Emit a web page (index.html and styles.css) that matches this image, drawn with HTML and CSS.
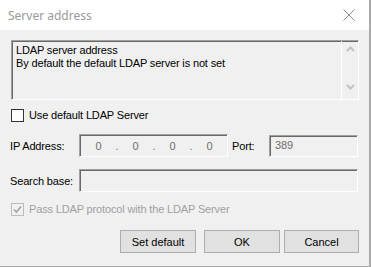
FILE: index.html
```
<html>

<head>
  <title>Server address</title>
  <link rel="stylesheet" href="styles.css">
</head>

<body>
  <div class="window">
    <div class="titlebar">
      <span class="title">Server address</span>
      <svg class="close" width="12" height="12" viewBox="0 0 12 12">
        <path d="M0.5 0.5 L11.5 11.5 M11.5 0.5 L0.5 11.5" stroke="#8a8a8a" stroke-width="1" fill="none" />
      </svg>
    </div>
    <div class="content">
      <div class="info-box sunken">
        <div class="info-text">
          <div>LDAP server address</div>
          <div>By default the default LDAP server is not set</div>
        </div>
        <div class="scrollbar">
          <svg width="9" height="6" viewBox="0 0 9 6">
            <path d="M1 5 L4.5 1.5 L8 5" stroke="#c2c2c2" stroke-width="2" fill="none" />
          </svg>
          <svg width="9" height="6" viewBox="0 0 9 6">
            <path d="M1 1 L4.5 4.5 L8 1" stroke="#c2c2c2" stroke-width="2" fill="none" />
          </svg>
        </div>
      </div>

      <label class="check-row">
        <span class="check-box"></span>
        Use default LDAP Server
      </label>

      <div class="field-row ip-row">
        <span class="field-label">IP Address:</span>
        <div class="ip-field sunken">
          <span class="octet">0</span><span class="dot">.</span>
          <span class="octet">0</span><span class="dot">.</span>
          <span class="octet">0</span><span class="dot">.</span>
          <span class="octet">0</span>
        </div>
        <span class="port-label">Port:</span>
        <div class="port-field sunken">389</div>
      </div>

      <div class="field-row search-row">
        <span class="field-label">Search base:</span>
        <div class="search-field sunken"></div>
      </div>

      <label class="check-row disabled">
        <span class="check-box checked">
          <svg width="9" height="9" viewBox="0 0 9 9">
            <path d="M1 4.5 L3.5 7 L8 1.5" stroke="#a3a3a3" stroke-width="1.6" fill="none" />
          </svg>
        </span>
        Pass LDAP protocol with the LDAP Server
      </label>

      <div class="buttons">
        <button class="btn btn-default">Set default</button>
        <button class="btn btn-ok">OK</button>
        <button class="btn btn-cancel">Cancel</button>
      </div>
    </div>
  </div>
</body>

</html>
```

FILE: styles.css
```
body {
  margin: 0;
  font-family: 'Liberation Sans', Arial, sans-serif;
  font-size: 11px;
  letter-spacing: -0.15px;
  color: #000;
  background: #f0f0f0;
}

.window {
  width: 369px;
  height: 266px;
  border-right: 2px solid #a9a9a9;
  border-bottom: 1px solid #a9a9a9;
  background: #f0f0f0;
  display: flex;
  flex-direction: column;
}

.titlebar {
  height: 30px;
  background: #fff;
  display: flex;
  align-items: center;
  justify-content: space-between;
  padding: 0 14px 0 8px;
}

.title {
  font-family: 'Noto Sans', sans-serif;
  font-size: 12px;
  letter-spacing: 0;
  color: #999;
}

.content {
  padding: 10px 10px 0 11px;
  display: flex;
  flex-direction: column;
}

.sunken {
  border: 1px solid;
  border-color: #a0a0a0 #fff #fff #a0a0a0;
  box-shadow: inset 1px 1px 0 #696969;
  background: #f0f0f0;
  box-sizing: border-box;
}

.info-box {
  width: 348px;
  height: 60px;
  display: flex;
}

.info-text {
  flex: 1;
  padding: 3px 0 0 4px;
  line-height: 13px;
}

.scrollbar {
  width: 17px;
  border-left: 1px solid #fff;
  display: flex;
  flex-direction: column;
  align-items: center;
  justify-content: space-between;
  padding: 5px 0 9px;
  box-sizing: border-box;
}

.check-row {
  display: flex;
  align-items: center;
  gap: 5px;
  margin-top: 9px;
  height: 12px;
}

.check-box {
  width: 11px;
  height: 11px;
  border: 1px solid #333;
  background: #fff;
  display: flex;
  align-items: center;
  justify-content: center;
}

.check-row.disabled {
  color: #a0a0a0;
  margin-top: 11px;
}

.check-box.checked {
  border-color: #bcbcbc;
  background: #f0f0f0;
}

.field-row {
  display: flex;
  align-items: center;
}

.ip-row {
  margin-top: 13px;
}

.search-row {
  margin-top: 12px;
}

.field-label {
  width: 69px;
  margin-left: -1px;
}

.ip-field {
  width: 149px;
  height: 23px;
  display: flex;
  align-items: center;
  padding-left: 9px;
  color: #6d6d6d;
}

.octet {
  width: 19px;
  text-align: center;
}

.dot {
  width: 18px;
  text-align: center;
}

.port-label {
  margin-left: 4px;
  width: 37px;
}

.port-field {
  width: 89px;
  height: 22px;
  padding: 3px 0 0 5px;
  color: #6d6d6d;
}

.search-field {
  width: 279px;
  height: 23px;
}

.buttons {
  display: flex;
  justify-content: flex-end;
  margin-top: 15px;
}

.btn {
  height: 23px;
  background: #e1e1e1;
  border: 1px solid #adadad;
  font-family: 'Liberation Sans', Arial, sans-serif;
  font-size: 11px;
  color: #000;
  padding: 0;
}

.btn-default {
  width: 76px;
}

.btn-ok {
  width: 76px;
  margin-left: 8px;
}

.btn-cancel {
  width: 75px;
  margin-left: 4px;
}
```
